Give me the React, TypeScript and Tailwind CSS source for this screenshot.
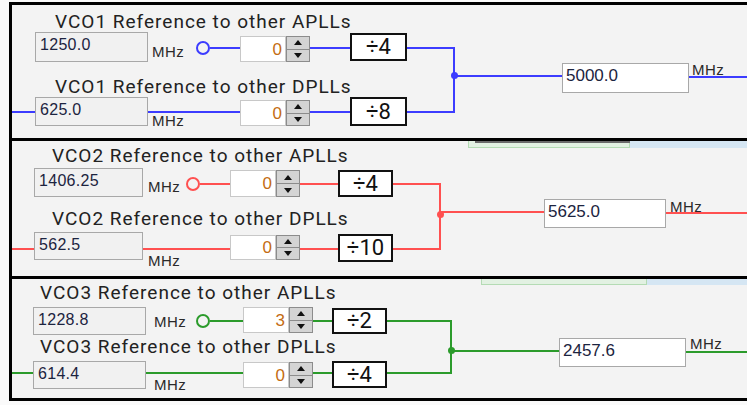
import React from "react";

const sans = "font-['Liberation_Sans',Arial,sans-serif]";

function Title({ className, children }: { className: string; children: React.ReactNode }) {
  return (
    <div className={`whitespace-nowrap text-[19px] leading-none tracking-[1px] text-[#222] font-['Roboto',sans-serif] ${className}`}>
      {children}
    </div>
  );
}

function Field({ className, v }: { className: string; v: string }) {
  return (
    <div className={`shrink-0 pl-[4px] pt-[4px] bg-[#f1f1f1] border border-[#a8a8a8] text-[16px] leading-none tracking-[0.3px] text-[#1c2440] ${sans} ${className}`}>
      {v}
    </div>
  );
}

function Mhz({ className }: { className: string }) {
  return <div className={`text-[15px] leading-none tracking-[0.5px] text-[#2a2a2a] ${sans} ${className}`}>MHz</div>;
}

function Wire({ className }: { className: string }) {
  return <div className={`shrink-0 h-[2px] ${className}`} />;
}

function Ring({ className }: { className: string }) {
  return <div className={`shrink-0 w-[14px] h-[14px] rounded-full border-2 bg-[#f3f3f3] ${className}`} />;
}

function Spin({ className, v }: { className: string; v: string }) {
  return (
    <div className={`shrink-0 flex w-[70px] ${className}`}>
      <div className={`flex-1 flex items-center justify-end pr-[3px] bg-white border border-[#c8c8c8] text-[17px] leading-none text-[#c46c12] ${sans}`}>
        {v}
      </div>
      <div className="w-[24px] flex flex-col border border-[#8c8c8c] bg-[#d4d4d4]">
        <div className="flex-1 flex items-center justify-center border-b border-[#8c8c8c]">
          <svg width="8" height="5" viewBox="0 0 8 5">
            <path d="M0 5L4 0L8 5Z" fill="#111" />
          </svg>
        </div>
        <div className="flex-1 flex items-center justify-center">
          <svg width="8" height="5" viewBox="0 0 8 5">
            <path d="M0 0L4 5L8 0Z" fill="#111" />
          </svg>
        </div>
      </div>
    </div>
  );
}

function Divider({ className, v }: { className: string; v: string }) {
  return (
    <div className={`shrink-0 flex items-center justify-center bg-white border-2 border-[#111] text-[22px] leading-none text-[#111] font-['Roboto',sans-serif] ${className}`}>
      {v}
    </div>
  );
}

function Bracket({ className, dotClass }: { className: string; dotClass: string }) {
  return (
    <div className={`shrink-0 relative border-t-2 border-r-2 border-b-2 ${className}`}>
      <div className={`absolute right-[-4.5px] w-[7px] h-[7px] rounded-full ${dotClass}`} />
    </div>
  );
}

function Output({ className, v }: { className: string; v: string }) {
  return (
    <div className={`shrink-0 pl-[3px] pt-[3px] bg-white border border-[#a8a8a8] text-[17px] leading-none text-[#1c2440] ${sans} ${className}`}>
      {v}
    </div>
  );
}

function Vco1() {
  return (
    <div className="relative flex items-start h-[136px] border-l-[3px] border-t-[3px] border-black bg-[#f3f3f3] overflow-hidden">
      <div className="flex flex-col shrink-0 pt-[7px]">
        <Title className="ml-[43px]">VCO1 Reference to other APLLs</Title>
        <div className="flex items-start mt-[1px]">
          <Field className="ml-[23px] w-[113px] h-[30px]" v="1250.0" />
          <div className="shrink-0 w-[48px] pl-[4px] pt-[12px]">
            <Mhz className="" />
          </div>
          <Ring className="mt-[9px] border-[#3c3cff]" />
          <Wire className="w-[30px] mt-[15px] bg-[#3c3cff]" />
          <Spin className="h-[26px] mt-[4px]" v="0" />
          <Wire className="w-[40px] mt-[15px] bg-[#3c3cff]" />
          <Divider className="w-[57px] h-[28px] mt-[1px]" v="÷4" />
        </div>
        <Title className="ml-[43px] mt-[15px]">VCO1 Reference to other DPLLs</Title>
        <div className="flex items-start mt-[1px]">
          <Wire className="w-[23px] mt-[14px] bg-[#3c3cff]" />
          <Field className="w-[113px] h-[29px]" v="625.0" />
          <div className="shrink-0 w-[92px] flex flex-col">
            <Wire className="w-full mt-[14px] bg-[#3c3cff]" />
            <Mhz className="pl-[4px]" />
          </div>
          <Spin className="h-[26px] mt-[3px]" v="0" />
          <Wire className="w-[40px] mt-[14px] bg-[#3c3cff]" />
          <Divider className="w-[57px] h-[29px]" v="÷8" />
        </div>
      </div>
      <Bracket className="w-[48px] h-[66px] mt-[42px] border-[#3c3cff]" dotClass="top-[23px] bg-[#3c3cff]" />
      <div className="flex-1 flex items-start mt-[58px]">
        <Wire className="w-[107px] mt-[12px] bg-[#3c3cff]" />
        <Output className="w-[127px] h-[30px]" v="5000.0" />
        <div className="flex-1 flex flex-col">
          <Mhz className="ml-[3px] mt-[-1px]" />
          <Wire className="w-full mt-[-1px] bg-[#3c3cff]" />
        </div>
      </div>
    </div>
  );
}

function Vco2() {
  return (
    <div className="relative flex items-start h-[138px] border-l-[3px] border-t-[3px] border-black bg-[#f3f3f3] overflow-hidden">
      <div className="absolute top-0 left-[456px] w-[162px] h-[7px] bg-[#e2f1e2] border border-t-0 border-[#b4dbb4]" />
      <div className="absolute top-0 left-[618px] right-0 h-[7px] bg-[#d5e6f3]" />
      <div className="absolute top-0 left-[463px] w-[155px] h-[2px] bg-[#6a6a6a]" />
      <div className="flex flex-col shrink-0 pt-[5px]">
        <Title className="ml-[40px]">VCO2 Reference to other APLLs</Title>
        <div className="flex items-start mt-[3px]">
          <Field className="ml-[22px] w-[109px] h-[29px]" v="1406.25" />
          <div className="shrink-0 w-[43px] pl-[5px] pt-[11px]">
            <Mhz className="" />
          </div>
          <Ring className="mt-[9px] border-[#ff5050]" />
          <Wire className="w-[30px] mt-[15px] bg-[#ff5050]" />
          <Spin className="h-[27px] mt-[2px]" v="0" />
          <Wire className="w-[38px] mt-[15px] bg-[#ff5050]" />
          <Divider className="w-[55px] h-[27px] mt-[2px]" v="÷4" />
        </div>
        <Title className="ml-[40px] mt-[12px]">VCO2 Reference to other DPLLs</Title>
        <div className="flex items-start mt-[4px]">
          <Wire className="w-[22px] mt-[16px] bg-[#ff5050]" />
          <Field className="w-[109px] h-[28px]" v="562.5" />
          <div className="shrink-0 w-[87px] flex flex-col">
            <Wire className="w-full mt-[16px] bg-[#ff5050]" />
            <Mhz className="pl-[5px] mt-[3px]" />
          </div>
          <Spin className="h-[25px] mt-[3px]" v="0" />
          <Wire className="w-[38px] mt-[16px] bg-[#ff5050]" />
          <Divider className="w-[55px] h-[28px] mt-[2px]" v="÷10" />
        </div>
      </div>
      <Bracket className="w-[48px] h-[67px] mt-[42px] border-[#ff5050]" dotClass="top-[26px] bg-[#ff5050]" />
      <div className="flex-1 flex items-start mt-[58px]">
        <Wire className="w-[103px] mt-[12px] bg-[#ff5050]" />
        <Output className="w-[122px] h-[29px]" v="5625.0" />
        <div className="flex-1 flex flex-col">
          <Mhz className="ml-[4px]" />
          <Wire className="w-full mt-[-2px] bg-[#ff5050]" />
        </div>
      </div>
    </div>
  );
}

function Vco3() {
  return (
    <div className="relative flex items-start h-[125px] border-l-[3px] border-t-[3px] border-b-[3px] border-black bg-[#f3f3f3] overflow-hidden">
      <div className="absolute top-0 left-[469px] w-[166px] h-[6px] bg-[#e2f1e2] border border-t-0 border-[#b4dbb4]" />
      <div className="absolute top-0 left-[635px] right-0 h-[6px] bg-[#d5e6f3]" />
      <div className="flex flex-col shrink-0 pt-[4px]">
        <Title className="ml-[28px]">VCO3 Reference to other APLLs</Title>
        <div className="flex items-start mt-[5px]">
          <Field className="ml-[21px] w-[113px] h-[28px]" v="1228.8" />
          <div className="shrink-0 w-[50px] pl-[8px] pt-[7px]">
            <Mhz className="" />
          </div>
          <Ring className="mt-[7px] border-[#2b9b2b]" />
          <Wire className="w-[33px] mt-[13px] bg-[#2b9b2b]" />
          <Spin className="h-[26px]" v="3" />
          <Wire className="w-[19px] mt-[13px] bg-[#2b9b2b]" />
          <Divider className="w-[55px] h-[26px] mt-[1px]" v="÷2" />
        </div>
        <Title className="ml-[28px] mt-[2px]">VCO3 Reference to other DPLLs</Title>
        <div className="flex items-start mt-[5px]">
          <Wire className="w-[21px] mt-[11px] bg-[#2b9b2b]" />
          <Field className="w-[113px] h-[28px]" v="614.4" />
          <div className="shrink-0 w-[97px] flex flex-col">
            <Wire className="w-full mt-[11px] bg-[#2b9b2b]" />
            <Mhz className="pl-[8px] mt-[3px]" />
          </div>
          <Spin className="h-[26px] mt-[1px]" v="0" />
          <Wire className="w-[19px] mt-[11px] bg-[#2b9b2b]" />
          <Divider className="w-[55px] h-[27px]" v="÷4" />
        </div>
      </div>
      <Bracket className="w-[65px] h-[54px] mt-[41px] border-[#2b9b2b]" dotClass="top-[25px] bg-[#2b9b2b]" />
      <div className="flex-1 flex items-start mt-[59px]">
        <Wire className="w-[107px] mt-[12px] bg-[#2b9b2b]" />
        <Output className="w-[127px] h-[29px]" v="2457.6" />
        <div className="flex-1 flex flex-col">
          <Mhz className="ml-[4px] mt-[-2px]" />
          <Wire className="w-full bg-[#2b9b2b]" />
        </div>
      </div>
    </div>
  );
}

export default function App() {
  return (
    <div className="w-[747px] h-[405px] overflow-hidden bg-[#fafafa]">
      <div className="ml-[9px] pt-[2px] flex flex-col">
        <Vco1 />
        <Vco2 />
        <Vco3 />
      </div>
    </div>
  );
}
